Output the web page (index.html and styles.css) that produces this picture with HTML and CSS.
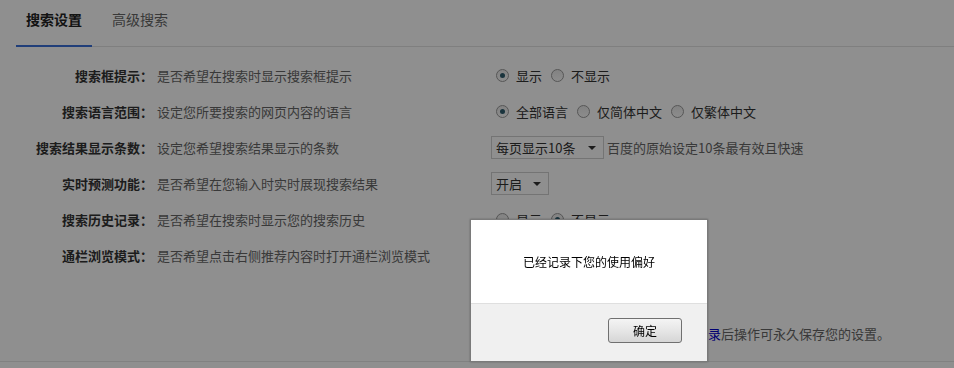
FILE: index.html
```html
<!DOCTYPE html>
<html lang="zh-CN">
<head>
  <meta charset="UTF-8">
  <title>搜索设置</title>
  <link rel="stylesheet" href="styles.css">
</head>
<body>

<div class="page">
  <div class="tabs">
    <span class="tab active">搜索设置</span>
    <span class="tab">高级搜索</span>
  </div>

  <div class="settings">
    <div class="label">搜索框提示：</div>
    <div class="desc">是否希望在搜索时显示搜索框提示</div>
    <div class="ctrl">
      <span class="opt"><i class="radio on"></i>显示</span>
      <span class="opt"><i class="radio"></i>不显示</span>
    </div>

    <div class="label">搜索语言范围：</div>
    <div class="desc">设定您所要搜索的网页内容的语言</div>
    <div class="ctrl">
      <span class="opt"><i class="radio on"></i>全部语言</span>
      <span class="opt"><i class="radio"></i>仅简体中文</span>
      <span class="opt"><i class="radio"></i>仅繁体中文</span>
    </div>

    <div class="label">搜索结果显示条数：</div>
    <div class="desc">设定您希望搜索结果显示的条数</div>
    <div class="ctrl">
      <span class="select wide">每页显示10条</span>
      <span class="hint">百度的原始设定10条最有效且快速</span>
    </div>

    <div class="label">实时预测功能：</div>
    <div class="desc">是否希望在您输入时实时展现搜索结果</div>
    <div class="ctrl">
      <span class="select">开启</span>
    </div>

    <div class="label">搜索历史记录：</div>
    <div class="desc">是否希望在搜索时显示您的搜索历史</div>
    <div class="ctrl">
      <span class="opt"><i class="radio"></i>显示</span>
      <span class="opt"><i class="radio on"></i>不显示</span>
    </div>

    <div class="label">通栏浏览模式：</div>
    <div class="desc">是否希望点击右侧推荐内容时打开通栏浏览模式</div>
    <div class="ctrl">
      <span class="opt"><i class="radio on"></i>开启</span>
      <span class="opt"><i class="radio"></i>关闭</span>
    </div>
  </div>

  <div class="footer">
    <span class="btn">保存设置</span>
    <span class="note">您当前尚未登录，请<a href="#">登录</a>后操作可永久保存您的设置。</span>
  </div>
</div>

<div class="mask"></div>

<div class="dialog">
  <div class="dialog-body">已经记录下您的使用偏好</div>
  <div class="dialog-foot">
    <span class="ok">确定</span>
  </div>
</div>

</body>
</html>
```

FILE: styles.css
```css
body { margin: 0; font-family: "Noto Sans CJK SC", "Liberation Sans", sans-serif; font-size: 13px; color: #333; background: #fff; }

.page { padding-bottom: 10px; border-bottom: 1px solid #e6e6e6; }

.tabs { display: flex; gap: 10px; margin-left: 16px; border-bottom: 1px solid #e2e2e2; }
.tab { padding: 9px 10px 0; height: 36px; font-size: 14px; line-height: 20px; color: #666; }
.tab.active { color: #222; font-weight: bold; border-bottom: 2px solid #3a6fd8; margin-bottom: -1px; }

.settings { display: grid; grid-template-columns: 157px 334px 1fr; grid-auto-rows: 36px; margin-top: 10px; }
.settings > div { display: flex; align-items: center; }
.label { justify-content: flex-end; padding-right: 4px; font-weight: bold; color: #333; }
.desc { color: #666; }

.opt { display: inline-flex; align-items: center; margin-right: 9px; color: #333; }
.ctrl .opt:first-child { margin-left: 5px; }
.radio { width: 11px; height: 11px; border: 1px solid #9a9a9a; border-radius: 50%; margin-right: 7px; background: linear-gradient(#e8e8e8, #fafafa); position: relative; }
.radio.on::after { content: ""; position: absolute; left: 3px; top: 3px; width: 5px; height: 5px; border-radius: 50%; background: #2f5d6e; }

.select { display: inline-flex; align-items: center; height: 21px; width: 52px; padding-left: 4px; border: 1px solid #cfcfcf; background: #fff; color: #333; position: relative; }
.select.wide { width: 107px; }
.select::after { content: ""; position: absolute; right: 7px; top: 9px; border: 4px solid transparent; border-top: 4px solid #333; border-bottom: 0; }
.hint { margin-left: 3px; color: #666; }

.footer { display: flex; align-items: center; height: 36px; margin-top: 42px; padding-left: 490px; }
.btn { display: inline-block; padding: 2px 12px; border: 1px solid #ccc; margin-right: 10px; }
.note { color: #666; }
.note a { color: #00c; text-decoration: none; }

.mask { position: fixed; left: 0; top: 0; right: 0; bottom: 0; background: rgba(0, 0, 0, 0.44); }

.dialog { position: fixed; left: 470px; top: 219px; width: 236px; height: 141px; border: 1px solid #7a7a7a; background: #fff; box-shadow: 0 0 2px rgba(0, 0, 0, 0.3); display: flex; flex-direction: column; }
.dialog-body { height: 83px; display: flex; align-items: center; justify-content: center; font-size: 12px; color: #000; }
.dialog-foot { flex: 1; background: #f0f0f0; border-top: 1px solid #dfdfdf; display: flex; justify-content: flex-end; align-items: flex-start; padding: 14px 25px 0 0; }
.ok { width: 72px; height: 23px; border: 1px solid #707070; border-radius: 3px; background: linear-gradient(#f4f4f4, #e6e6e6 50%, #d6d6d6); display: flex; align-items: center; justify-content: center; font-size: 12px; color: #000; }
```
